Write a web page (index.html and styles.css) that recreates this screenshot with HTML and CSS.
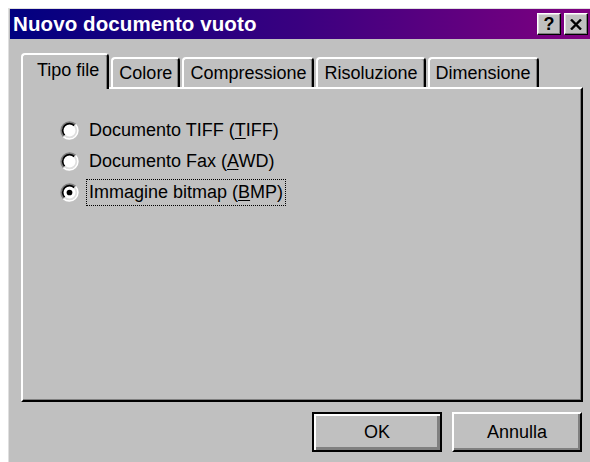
FILE: index.html
```html
<!DOCTYPE html>
<html lang="it">
<head>
<meta charset="utf-8">
<title>Nuovo documento vuoto</title>
<link rel="stylesheet" href="styles.css">
</head>
<body>
<div class="dialog">
  <div class="titlebar">
    <span class="title">Nuovo documento vuoto</span>
    <div class="caption-buttons">
      <button class="cap-btn help" type="button">?</button>
      <button class="cap-btn close" type="button" aria-label="Chiudi">
        <svg width="12" height="11" viewBox="0 0 12 11"><path d="M1 0.5 L11 10.5 M11 0.5 L1 10.5" stroke="#000" stroke-width="2.4" fill="none"/></svg>
      </button>
    </div>
  </div>

  <div class="content">
    <div class="tabs">
      <div class="tab active">Tipo file</div>
      <div class="tab">Colore</div>
      <div class="tab">Compressione</div>
      <div class="tab">Risoluzione</div>
      <div class="tab">Dimensione</div>
    </div>

    <div class="panel">
      <label class="option">
        <svg class="radio" width="19" height="19" viewBox="0 0 20 20">
          <circle cx="10" cy="10" r="8" fill="#fff"/>
          <path d="M3.64 16.36 A9 9 0 0 1 16.36 3.64" stroke="#808080" stroke-width="1.8" fill="none"/>
          <path d="M16.36 3.64 A9 9 0 0 1 3.64 16.36" stroke="#fff" stroke-width="1.8" fill="none"/>
          <path d="M4.9 15.1 A7.2 7.2 0 0 1 15.1 4.9" stroke="#000" stroke-width="1.8" fill="none"/>
          <path d="M15.1 4.9 A7.2 7.2 0 0 1 4.9 15.1" stroke="#dfdfdf" stroke-width="1.8" fill="none"/>
        </svg>
        <span class="label">Documento TIFF (<u>T</u>IFF)</span>
      </label>
      <label class="option">
        <svg class="radio" width="19" height="19" viewBox="0 0 20 20">
          <circle cx="10" cy="10" r="8" fill="#fff"/>
          <path d="M3.64 16.36 A9 9 0 0 1 16.36 3.64" stroke="#808080" stroke-width="1.8" fill="none"/>
          <path d="M16.36 3.64 A9 9 0 0 1 3.64 16.36" stroke="#fff" stroke-width="1.8" fill="none"/>
          <path d="M4.9 15.1 A7.2 7.2 0 0 1 15.1 4.9" stroke="#000" stroke-width="1.8" fill="none"/>
          <path d="M15.1 4.9 A7.2 7.2 0 0 1 4.9 15.1" stroke="#dfdfdf" stroke-width="1.8" fill="none"/>
        </svg>
        <span class="label">Documento Fax (<u>A</u>WD)</span>
      </label>
      <label class="option">
        <svg class="radio" width="19" height="19" viewBox="0 0 20 20">
          <circle cx="10" cy="10" r="8" fill="#fff"/>
          <path d="M3.64 16.36 A9 9 0 0 1 16.36 3.64" stroke="#808080" stroke-width="1.8" fill="none"/>
          <path d="M16.36 3.64 A9 9 0 0 1 3.64 16.36" stroke="#fff" stroke-width="1.8" fill="none"/>
          <path d="M4.9 15.1 A7.2 7.2 0 0 1 15.1 4.9" stroke="#000" stroke-width="1.8" fill="none"/>
          <path d="M15.1 4.9 A7.2 7.2 0 0 1 4.9 15.1" stroke="#dfdfdf" stroke-width="1.8" fill="none"/>
          <circle cx="10" cy="10" r="3" fill="#000"/>
        </svg>
        <span class="label focused">Immagine bitmap (<u>B</u>MP)</span>
      </label>
    </div>

    <div class="actions">
      <button class="btn default" type="button">OK</button>
      <button class="btn" type="button">Annulla</button>
    </div>
  </div>
</div>
</body>
</html>
```

FILE: styles.css
```css
html, body {
  margin: 0;
  padding: 0;
  background: #fff;
  overflow: hidden;
}

body {
  width: 590px;
  height: 462px;
  font-family: "Liberation Sans", Arial, sans-serif;
  font-size: 18px;
  color: #000;
}

.dialog {
  box-sizing: border-box;
  margin: 8px 0 0 8px;
  width: 582px;
  height: 454px;
  background: #c0c0c0;
  border-top: 1px solid #dfdfdf;
  border-left: 1px solid #dfdfdf;
}

/* caption bar */
.titlebar {
  margin: 0 0 0 1px;
  height: 30px;
  display: flex;
  align-items: center;
  justify-content: space-between;
  padding: 0 2px 0 3px;
  background: linear-gradient(to right, #000080 0%, #3a0080 50%, #800080 100%);
}

.title {
  color: #fff;
  font-weight: bold;
  font-size: 20.5px;
  letter-spacing: 0.1px;
}

.caption-buttons {
  display: flex;
  gap: 3px;
}

.cap-btn {
  box-sizing: border-box;
  width: 24px;
  height: 22px;
  padding: 0;
  margin: 0;
  display: flex;
  align-items: center;
  justify-content: center;
  background: #c0c0c0;
  border: 1px solid;
  border-color: #fff #000 #000 #fff;
  box-shadow: inset -1px -1px #808080, inset 1px 1px #dfdfdf;
  font-family: "Liberation Sans", Arial, sans-serif;
  font-weight: bold;
  font-size: 18px;
  line-height: 1;
  color: #000;
}

/* dialog body */
.content {
  padding: 14px 0 0 12px;
}

.tabs {
  display: flex;
  align-items: flex-end;
  gap: 2px;
  height: 34px;
}

.tab {
  box-sizing: border-box;
  height: 30px;
  padding: 0 6px;
  display: flex;
  align-items: center;
  justify-content: center;
  border: 2px solid;
  border-bottom: none;
  border-color: #fff #000 transparent #fff;
  border-radius: 4px 4px 0 0;
  box-shadow: inset -1px 0 #808080;
  background: #c0c0c0;
  white-space: nowrap;
}

.tab.active {
  height: 36px;
  margin-bottom: -2px;
  padding: 0 8px 4px 14px;
  position: relative;
  z-index: 1;
}

.panel {
  box-sizing: border-box;
  width: 562px;
  height: 315px;
  padding: 26px 0 0 37px;
  border: 2px solid;
  border-color: #fff #000 #000 #fff;
  box-shadow: inset -1px -1px #808080;
  display: flex;
  flex-direction: column;
}

.option {
  height: 31px;
  display: flex;
  align-items: center;
  gap: 7px;
}

.radio {
  flex: none;
}

.label {
  border: 1px dotted transparent;
  padding: 0 2px;
  line-height: 25px;
  white-space: nowrap;
}

.label.focused {
  border-color: #000;
}

.label u {
  text-decoration-thickness: 1px;
  text-underline-offset: 2px;
}

.actions {
  width: 561px;
  display: flex;
  justify-content: flex-end;
  gap: 10px;
  margin-top: 10px;
}

.btn {
  box-sizing: border-box;
  width: 130px;
  height: 40px;
  margin: 0;
  padding: 0;
  background: #c0c0c0;
  border: 2px solid;
  border-color: #fff #000 #000 #fff;
  box-shadow: inset -2px -2px #808080;
  font-family: "Liberation Sans", Arial, sans-serif;
  font-size: 18px;
  color: #000;
}

.btn.default {
  border-color: #000;
  box-shadow: inset 2px 2px #fff, inset -3px -3px #808080;
}
```
